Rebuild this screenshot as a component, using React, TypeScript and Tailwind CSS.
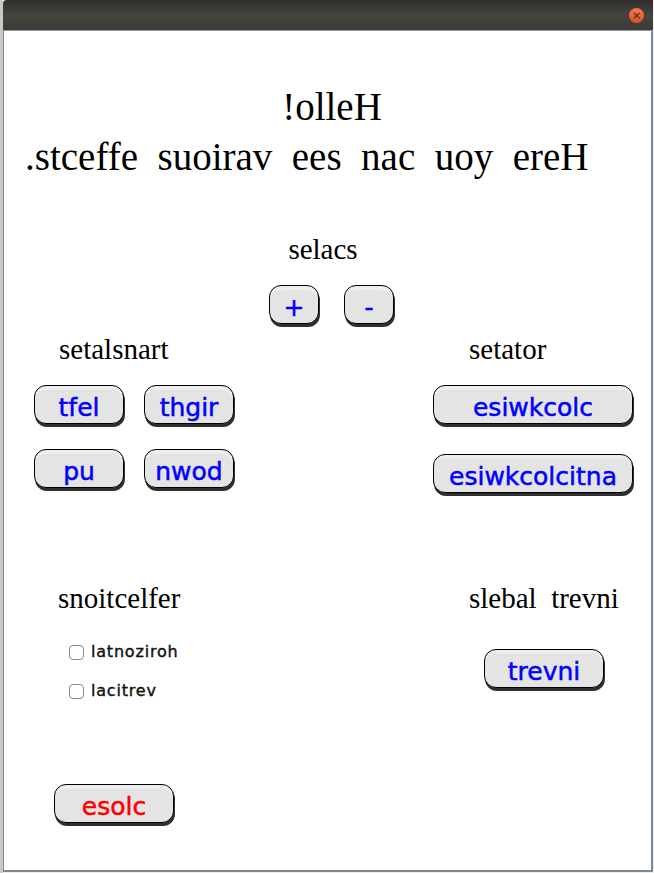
import React from 'react';

const BTN =
  "flex items-center justify-center h-[39px] pt-[6px] rounded-[12px] border border-black bg-[#e4e4e4] shadow-[inset_0_4px_0_#ededed,1px_3px_0_#2f2f2f] font-['DejaVu_Sans',sans-serif] text-[25px] leading-none [-webkit-text-stroke:0.5px]";

function Btn({ label, className = '' }: { label: string; className?: string }) {
  return <div className={`${BTN} ${className}`}>{label}</div>;
}

function Check({ label }: { label: string }) {
  return (
    <div className="flex items-center h-[20px] gap-[7px]">
      <div className="w-[15px] h-[15px] rounded-[4px] border border-[#8a8a8a] bg-white" />
      <span className="font-['DejaVu_Sans',sans-serif] text-[16px] text-[#111] tracking-[0.8px] [-webkit-text-stroke:0.4px]">
        {label}
      </span>
    </div>
  );
}

export default function App() {
  return (
    <div className="w-[654px] h-[873px] flex bg-[#ededed] overflow-hidden font-['Liberation_Serif',serif] text-black">
      {/* desktop strip */}
      <div className="w-[3px] bg-[#c9c9c9]" />

      {/* window */}
      <div className="w-[650px] h-[872px] flex flex-col">
        {/* title bar */}
        <div className="h-[31px] flex items-center justify-end pr-[9px] rounded-tl-[4px] bg-gradient-to-b from-[#2f2e2b] via-[#45443f] to-[#3b3a36] border-b border-[#8e99a4]">
          <div className="w-[15px] h-[15px] mt-[1px] rounded-full bg-gradient-to-b from-[#f47a4f] to-[#dd4f22] flex items-center justify-center text-[#3b2418] text-[11px] leading-none font-['DejaVu_Sans',sans-serif]">
            ×
          </div>
        </div>

        {/* content */}
        <div className="flex-1 bg-white border-l border-r-2 border-b-2 border-l-[#8a8a8a] border-r-[#7b8896] border-b-[#7b8896]">
          {/* heading */}
          <div className="pt-[51px] text-[39px] leading-[50px]">
            <p className="text-center pl-[9px]">!olleH</p>
            <p className="pl-[21px] whitespace-pre">.stceffe  suoirav  ees  nac  uoy  ereH</p>
          </div>

          {/* scales */}
          <p className="mt-[51px] text-center pr-[9px] text-[29px] leading-[32px]">selacs</p>
          <div className="mt-[20px] flex justify-center gap-[25px] pl-[8px]">
            <Btn label="+" className="w-[50px] text-[#0000ff]" />
            <Btn label="-" className="w-[50px] text-[#0000ff]" />
          </div>

          {/* translates / rotates */}
          <div className="mt-[9px] grid grid-cols-[399px_201px] pl-[30px] items-start">
            <div>
              <p className="pl-[25px] text-[29px] leading-[32px]">setalsnart</p>
              <div className="mt-[20px] grid grid-cols-[90px_90px] gap-x-[20px] gap-y-[25px]">
                <Btn label="tfel" className="text-[#0000ff]" />
                <Btn label="thgir" className="text-[#0000ff]" />
                <Btn label="pu" className="text-[#0000ff]" />
                <Btn label="nwod" className="text-[#0000ff]" />
              </div>
            </div>
            <div>
              <p className="pl-[36px] text-[29px] leading-[32px]">setator</p>
              <div className="mt-[20px] flex flex-col gap-[30px]">
                <Btn label="esiwkcolc" className="w-[200px] text-[#0000ff]" />
                <Btn label="esiwkcolcitna" className="w-[200px] text-[#0000ff]" />
              </div>
            </div>
          </div>

          {/* reflections / invert */}
          <div className="mt-[89px] grid grid-cols-[399px_201px] pl-[30px] items-start">
            <div>
              <p className="pl-[24px] text-[29px] leading-[32px]">snoitcelfer</p>
              <div className="mt-[28px] pl-[35px] flex flex-col gap-[19px]">
                <Check label="latnoziroh" />
                <Check label="lacitrev" />
              </div>
            </div>
            <div>
              <p className="pl-[36px] text-[29px] leading-[32px] whitespace-pre">slebal  trevni</p>
              <div className="mt-[35px] pl-[51px]">
                <Btn label="trevni" className="w-[120px] text-[#0000ff]" />
              </div>
            </div>
          </div>

          {/* close */}
          <div className="mt-[83px] pl-[50px]">
            <Btn label="esolc" className="w-[120px] text-[#ff0000]" />
          </div>
        </div>
      </div>
    </div>
  );
}
